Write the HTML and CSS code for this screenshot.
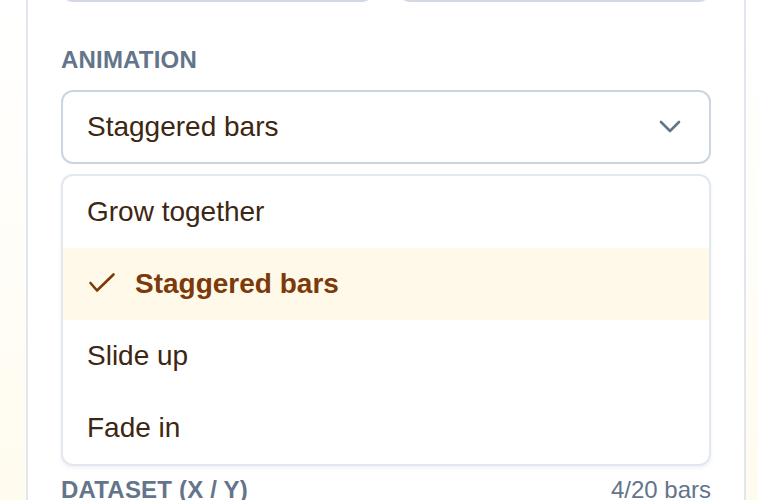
FILE: index.html
```html
<!DOCTYPE html>
<html lang="en">
<head>
<meta charset="utf-8">
<title>Animation</title>
<link rel="stylesheet" href="styles.css">
</head>
<body>
<div class="panel">
  <div class="fields">
    <div class="field"></div>
    <div class="field"></div>
  </div>

  <div class="section-label">Animation</div>
  <div class="select">
    <span class="select-value">Staggered bars</span>
    <svg class="chevron" width="24" height="24" viewBox="0 0 24 24" aria-hidden="true">
      <polyline points="3,7 12,16 21,7" fill="none" stroke="#64748b" stroke-width="2.6" stroke-linecap="round" stroke-linejoin="round"/>
    </svg>
  </div>

  <ul class="menu">
    <li class="item">Grow together</li>
    <li class="item item-selected">
      <svg class="check" width="30" height="28" viewBox="0 0 30 28" aria-hidden="true">
        <polyline points="3.5,13 10,20.5 26.5,4.5" fill="none" stroke="#7c3a0b" stroke-width="2.6" stroke-linecap="round" stroke-linejoin="round"/>
      </svg>
      <span>Staggered bars</span>
    </li>
    <li class="item">Slide up</li>
    <li class="item">Fade in</li>
  </ul>

  <div class="row">
    <span class="section-label inline">Dataset (X / Y)</span>
    <span class="count">4/20 bars</span>
  </div>
</div>
</body>
</html>
```

FILE: styles.css
```css
html, body {
  margin: 0;
  padding: 0;
}

body {
  height: 500px;
  overflow: hidden;
  background: linear-gradient(180deg, #ffffff 0%, #fffdf6 60%, #fffbee 100%);
  font-family: "Liberation Sans", Arial, sans-serif;
  color: #3d2713;
}

.panel {
  box-sizing: border-box;
  width: 720px;
  margin-left: 26px;
  margin-top: -60px;
  padding: 0 33px 40px;
  background: #ffffff;
  border-left: 2px solid #e3e6f0;
  border-right: 2px solid #e3e6f0;
}

.fields {
  display: grid;
  grid-template-columns: 1fr 1fr;
  gap: 24px;
}

.field {
  box-sizing: border-box;
  height: 62px;
  border: 2px solid #d3d9e4;
  border-radius: 12px;
  background: #fff;
}

.section-label {
  margin-top: 42px;
  margin-bottom: 14px;
  font-size: 24px;
  line-height: 32px;
  font-weight: 700;
  text-transform: uppercase;
  letter-spacing: 0.2px;
  color: #64748b;
}

.section-label.inline {
  margin: 0;
}

.select {
  box-sizing: border-box;
  height: 74px;
  display: flex;
  align-items: center;
  justify-content: space-between;
  padding: 0 27px 0 24px;
  border: 2px solid #cbd5e1;
  border-radius: 12px;
  background: #fff;
  font-size: 28px;
  color: #3d2713;
}

.chevron {
  display: block;
}

.menu {
  list-style: none;
  margin: 10px 0 0;
  padding: 0;
  border: 2px solid #e2e8f0;
  border-radius: 12px;
  overflow: hidden;
  background: #fff;
  box-shadow: 0 2px 4px rgba(15, 23, 42, 0.06);
}

.item {
  height: 72px;
  display: flex;
  align-items: center;
  padding-left: 24px;
  font-size: 28px;
  color: #3d2713;
}

.item-selected {
  background: #fef9e8;
  color: #7c3a0b;
  font-weight: 700;
  gap: 18px;
}

.check {
  display: block;
  overflow: visible;
}

.row {
  display: flex;
  justify-content: space-between;
  align-items: baseline;
  margin-top: 8px;
  line-height: 32px;
}

.count {
  font-size: 24px;
  color: #64748b;
}
```
